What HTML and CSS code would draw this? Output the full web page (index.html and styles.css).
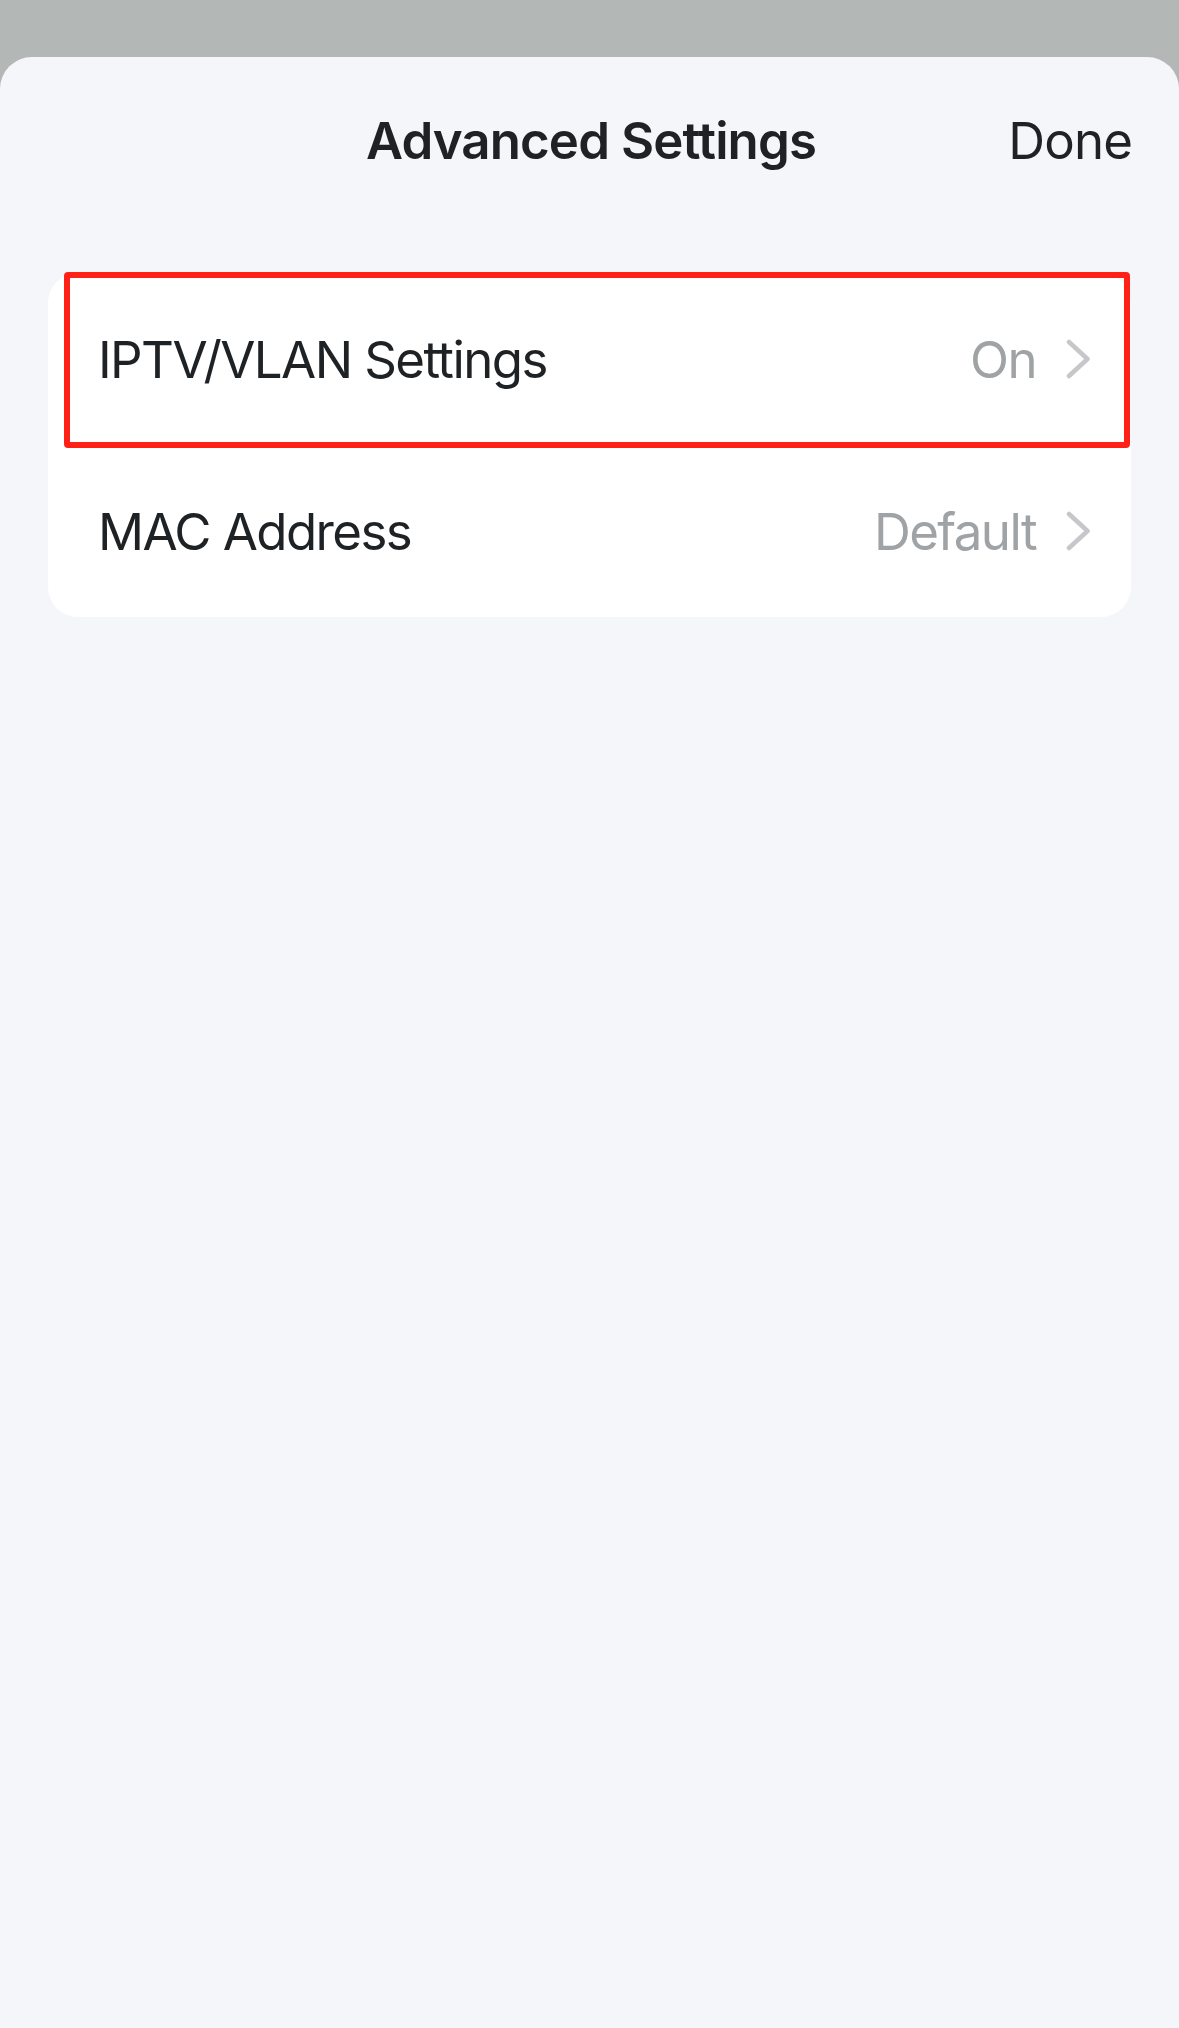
FILE: index.html
```html
<!DOCTYPE html>
<html lang="en">
<head>
    <meta charset="UTF-8">
    <meta name="viewport" content="width=device-width, initial-scale=1.0">
    <title>Advanced Settings</title>
    <link rel="stylesheet" href="styles.css">
</head>
<body>

<div class="sheet">
    <div class="sheet-header">
        <span></span>
        <h1 class="sheet-title">Advanced Settings</h1>
        <button class="done-btn">Done</button>
    </div>

    <ul class="settings-list">
        <li class="settings-row highlight">
            <span class="row-label">IPTV/VLAN Settings</span>
            <span class="row-value">On</span>
            <svg class="chevron" width="25" height="40" viewBox="0 0 25 40">
                <polyline points="3,3 21.5,20 3,37" fill="none" stroke="#c7c7cb" stroke-width="4.5" stroke-linecap="round" stroke-linejoin="round"/>
            </svg>
        </li>
        <li class="settings-row">
            <span class="row-label">MAC Address</span>
            <span class="row-value">Default</span>
            <svg class="chevron" width="25" height="40" viewBox="0 0 25 40">
                <polyline points="3,3 21.5,20 3,37" fill="none" stroke="#c7c7cb" stroke-width="4.5" stroke-linecap="round" stroke-linejoin="round"/>
            </svg>
        </li>
    </ul>
</div>

</body>
</html>
```

FILE: styles.css
```css
/* Bottom sheet with grouped settings list */
html, body {
    margin: 0;
    padding: 0;
}

body {
    background-color: #b3b7b5;
    font-family: Inter, "Noto Sans", sans-serif;
    color: #1e2225;
    height: 2028px;
    overflow: hidden;
}

.sheet {
    margin-top: 57px;
    height: 1971px;
    background-color: #f5f6fa;
    border-radius: 32px 32px 0 0;
    box-sizing: border-box;
    padding-top: 53px;
}

.sheet-header {
    display: grid;
    grid-template-columns: 1fr auto 1fr;
    align-items: center;
    padding: 0 47px 0 50px;
    height: 61px;
}

.sheet-title {
    margin: 0;
    font-size: 51px;
    font-weight: 600;
    line-height: 61px;
    letter-spacing: -0.9px;
}

.done-btn {
    justify-self: end;
    background: none;
    border: none;
    padding: 0;
    font-family: inherit;
    font-size: 51px;
    line-height: 61px;
    color: #1e2225;
    letter-spacing: -0.9px;
}

.settings-list {
    list-style: none;
    margin: 102px 48px 0;
    padding: 0;
    background-color: white;
    border-radius: 30px;
}

.settings-row {
    position: relative;
    display: flex;
    align-items: center;
    height: 172px;
    padding: 0 40px 0 50px;
    font-size: 51px;
    letter-spacing: -1.6px;
}

.row-label {
    flex: 1;
}

.row-value {
    color: #a0a3a5;
    margin-right: 30px;
}

.chevron {
    display: block;
}

/* red outline drawn over the selected row */
.highlight::after {
    content: "";
    position: absolute;
    top: -1px;
    bottom: -3px;
    left: 16px;
    right: 1px;
    border: 6px solid #ff2016;
    border-radius: 4px;
}
```
